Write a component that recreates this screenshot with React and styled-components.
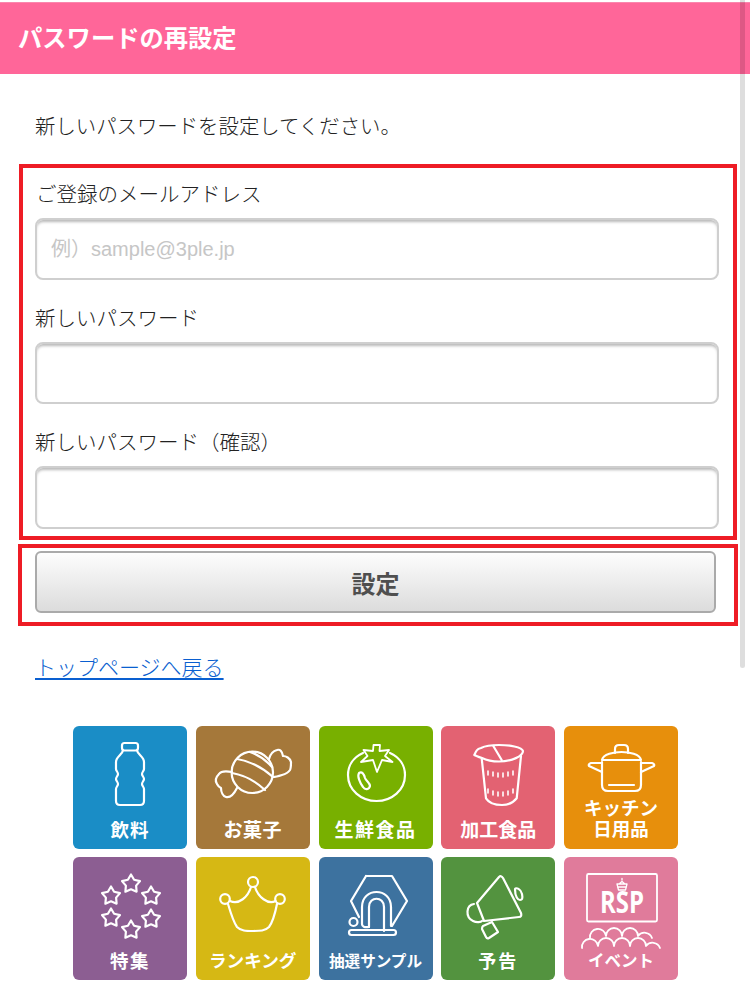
import React from "react";
import styled, { createGlobalStyle } from "styled-components";

const Global = createGlobalStyle`
  html, body { margin: 0; padding: 0; background: #fff; }
  body { font-family: "Noto Sans CJK JP", "Noto Sans", sans-serif; color: #222; overflow: hidden; }
`;
const Page = styled.div`position: relative; width: 750px; height: 996px; overflow: hidden;`;
const ScrollThumb = styled.div`
  position: absolute; top: 0; right: 5px; width: 5px; height: 668px;
  background: rgba(0,0,0,.13); border-radius: 0 0 3px 3px;
`;
const Header = styled.h1`
  margin: 2px 0 0; height: 72px; display: flex; align-items: center; padding: 0 0 2px 18px;
  background: #ff6699; border-top: 1px solid #fb86ad; box-sizing: border-box;
  color: #fff; font-size: 24.3px; font-weight: 700; line-height: 1;
`;
const Intro = styled.p`
  margin: 0; padding: 36px 0 0 35px; height: 90px; box-sizing: border-box;
  font-size: 20.4px; line-height: 30px; font-weight: 300;
`;
const RedBox = styled.div`border: 4px solid #ee1c25; box-sizing: border-box;`;
const FormBox = styled(RedBox)`
  margin-left: 19px; width: 718px; height: 376px; padding: 10px 14px 7px 12px;
  display: flex; flex-direction: column;
`;
const Label = styled.label`
  display: block; font-size: 20.5px; line-height: 30px; height: 30px; font-weight: 300;
  margin: ${p => (p.$first ? "0 0 10px 1px" : "22px 0 10px 0")};
`;
const Input = styled.input`
  display: block; width: 100%; height: ${p => p.$h || 62}px; box-sizing: border-box; padding: 0 14px;
  border: 2px solid #cfcfcf; border-radius: 8px; outline: none; background: #fff;
  box-shadow: inset 0 3px 3px -1px rgba(0,0,0,.28);
  font-family: "Liberation Sans", "Noto Sans CJK JP", sans-serif; font-size: 20px; font-weight: 400;
  &::placeholder { color: #c6c6c6; opacity: 1; }
`;
const ButtonBox = styled(RedBox)`
  margin: 4px 0 0 18px; width: 720px; height: 82px; padding: 3px 18px 0 13px;
`;
const SubmitButton = styled.button`
  display: block; width: 100%; height: 62px; box-sizing: border-box; padding: 0;
  border: 2px solid #aaa; border-radius: 6px;
  background: linear-gradient(#fdfdfd, #dcdcdc);
  color: #4f4f4f; font-family: "Noto Sans CJK JP", sans-serif; font-size: 24px; font-weight: 700;
`;
const BackLink = styled.a`
  display: inline-block; margin: 25px 0 0 35px; font-size: 21px; line-height: 30px; font-weight: 300;
  color: #0a5fd0; text-decoration: underline; text-underline-offset: 3px;
`;
const LinkRow = styled.div`height: 100px;`;
const Grid = styled.div`
  margin-left: 73px; display: grid; grid-template-columns: repeat(5, 114px);
  grid-auto-rows: 123px; column-gap: 8.75px; row-gap: 8px;
`;
const Tile = styled.div`
  display: grid; grid-template: 1fr / 1fr; border-radius: 6px; background: ${p => p.$bg}; overflow: hidden;
  & > * { grid-area: 1 / 1; }
`;
const Icon = styled.svg`
  display: block; width: 114px; height: 123px;
  fill: none; stroke: #fff; stroke-width: 2.2; stroke-linecap: round; stroke-linejoin: round;
`;
const TileLabel = styled.span`
  align-self: end; justify-self: center; margin-bottom: ${p => p.$mb ?? 9}px; text-align: center;
  color: #fff; font-weight: 700; white-space: nowrap;
  font-size: ${p => p.$size}px; line-height: ${p => p.$lh || 22}px;
  letter-spacing: ${p => p.$ls || 0}px;
`;

const star = (cx, cy, r) => {
  const pts = [];
  for (let i = 0; i < 10; i++) {
    const rad = i % 2 ? r * 0.56 : r;
    const a = -Math.PI / 2 + (i * Math.PI) / 5;
    pts.push(`${(cx + rad * Math.cos(a)).toFixed(1)},${(cy + rad * Math.sin(a)).toFixed(1)}`);
  }
  return pts.join(" ");
};

const Bottle = () => (
  <Icon viewBox="0 0 114 123">
    <rect x="49" y="17" width="16" height="7.500" rx="2.500" />
    <path d="M50 24.500C49 29 43 31 43 36V43C43 45 45 46 45 48S43 51 43 53 45 56 45 58 43 61 43 63V75Q43 79 47 79H67Q71 79 71 75V63C71 61 69 60 69 58S71 55 71 53 69 50 69 48 71 45 71 43V36C71 31 65 29 64 24.500" />
  </Icon>
);
const Candy = () => (
  <Icon viewBox="0 0 114 123">
    <circle cx="56.300" cy="46.300" r="20.700" />
    <path d="M41 33Q60 36 77 51" />
    <path d="M36 47Q54 50 69 64" />
    <path d="M54 26Q66 30 76 41" />
    <path d="M36 46C31 45 25 45 23 48 20 51 19 55 21 58 22 60 23 61 25 62 25 66 27 70 30 71 34 72 38 68 41 62" />
    <path d="M73 33C74 29 77 25 81 24 84 23 86 25 87 30 90 30 94 32 95 36 95 39 95 42 94 44 92 47 90 48 86 49 83 50 79 51 77 51" />
  </Icon>
);
const Tomato = () => (
  <Icon viewBox="0 0 114 123">
    <path d="M44 27C35 31 29 39 29 49 29 64 42 75 57.500 75S86 64 86 49C86 39 80 31 71 27" />
    <path d="M54.500 19H61L60.500 25 70 24 66 30 73.500 36 63 34 58 46 54 34 42 36 48.500 30 44.500 24 54 25Z" strokeWidth="1.800" />
    <path d="M40 47C43 45 45 48 46 52 47 55 51 57 51 60 50 64 46 64 44 61 41 57 38 50 40 47Z" />
  </Icon>
);
const Cup = () => (
  <Icon viewBox="0 0 114 123">
    <path d="M33.300 29C35 25 36 23 40 22 46 19 52 19 58 19 68 19 81 21 82 25 82 30 71 35.500 58 35.500 51 35.500 45 34 41 32 38 31 35 30 33.300 29Z" />
    <path d="M52.300 20L60.700 34" />
    <path d="M40.700 32.300L45 72.300C48 77 55 79 61 79S72 77 75.700 72.300L80 30" />
    <path d="M47 45V49M52 46V50M57 47V51M62 47V51M67 46V50M72 45V49M47 63V67M52 65V69M57 66V70M62 66V70M67 65V69M72 63V67" strokeWidth="1.600" />
  </Icon>
);
const Pot = () => (
  <Icon viewBox="0 0 114 123">
    <path d="M51 27V23Q51 19 55 19H60Q64 19 64 23V27" />
    <path d="M38 34C39 28 50 26 57.500 26S76 28 77 34Z" />
    <path d="M38 36V59Q38 65 44 65H71Q77 65 77 59V36" />
    <path d="M38 37H27Q24 38 25 40L38 46" />
    <path d="M77 37H88Q91 38 90 40L77 46" />
    <path d="M45 59H70" />
  </Icon>
);
const Stars = () => (
  <Icon viewBox="0 0 114 123">
    {[[58, 27], [38, 39], [78, 39], [38, 61], [78, 62], [58, 73]].map(([x, y]) => (
      <polygon key={`${x}${y}`} points={star(x, y, 9.500)} />
    ))}
  </Icon>
);
const Crown = () => (
  <Icon viewBox="0 0 114 123">
    <circle cx="57" cy="25" r="5" />
    <circle cx="29" cy="42" r="4.800" />
    <circle cx="84" cy="42" r="4.800" />
    <path d="M34 44C43 48 52 40 55 30M59 30C62 40 72 48 79.500 44" />
    <path d="M32 47C35 57 38 66 41 70 45 74 50 74 57 74S69 74 73 70C76 66 79 57 81 47" />
  </Icon>
);
const Sampling = () => (
  <Icon viewBox="0 0 114 123">
    <path d="M47 19H73L88 44 73 69H72V50C72 30 43 30 43 50V67" />
    <path d="M47 19 32 44 40 60" />
    <path d="M50 70V50C50 39 65 39 65 50V74" />
    <circle cx="34.500" cy="65" r="4" />
    <path d="M43 67Q43 71 50 70" />
    <rect x="30" y="73" width="47" height="5" rx="2.500" />
  </Icon>
);
const Megaphone = () => (
  <Icon viewBox="0 0 114 123">
    <path d="M36 46L58 20Q60 18 62 21L80 56Q81 60 78 60L43 64Z" />
    <path d="M33 47C25 48 24 60 32 64 36 66 40 65 41 64" />
    <path d="M42 69L51 65 57 75 48 81Q46 82 45 80L41 72Q41 70 42 69Z" />
    <path d="M74 32C75 30 80 32 81 37S81 43 79 43 74 40 74 32Z" />
  </Icon>
);
const RspText = styled.text`
  fill: #fff; stroke: none; font-family: "Open Sans", "Liberation Sans", sans-serif; font-weight: 700; font-size: 30px;
`;
const Rsp = () => (
  <Icon viewBox="0 0 114 123">
    <rect x="23" y="17" width="70" height="47.500" rx="1.500" strokeWidth="1.800" />
    <RspText x="58" y="56" textAnchor="middle" textLength="44" lengthAdjust="spacingAndGlyphs">RSP</RspText>
    <path d="M53 27H63L61.500 33H54.500ZM55 27L58 24.500 61 27M58 21.500V23M53.500 30H62.500" strokeWidth="1.300" />
    <path d="M26 81A8 8 0 0 1 42 79A8 8 0 0 1 58 79A8 8 0 0 1 74 79A8 8 0 0 1 88 81" strokeWidth="1.800" />
    <path d="M18 91A8 8 0 0 1 34 89A8 8 0 0 1 50 89A8 8 0 0 1 66 89A8 8 0 0 1 82 89A8 8 0 0 1 96 91" strokeWidth="1.800" />
  </Icon>
);

const tiles = [
  { bg: "#1a8dc6", I: Bottle, text: "飲料", size: 18.5, ls: 1 },
  { bg: "#a5783a", I: Candy, text: "お菓子", size: 19, ls: 0.5 },
  { bg: "#78b000", I: Tomato, text: "生鮮食品", size: 19, ls: 1.5 },
  { bg: "#e36272", I: Cup, text: "加工食品", size: 19 },
  { bg: "#e78f0c", I: Pot, text: <>キッチン<br />日用品</>, size: 18.5, lh: 21, mb: 10 },
  { bg: "#8c5e92", I: Stars, text: "特集", size: 18.5, ls: 1.5 },
  { bg: "#d6b814", I: Crown, text: "ランキング", size: 17.6 },
  { bg: "#3d729f", I: Sampling, text: "抽選サンプル", size: 15.6 },
  { bg: "#53933f", I: Megaphone, text: "予告", size: 18, ls: 2 },
  { bg: "#e07b9b", I: Rsp, text: "イベント", size: 16.5 },
];

export default function App() {
  return (
    <Page>
      <Global />
      <Header>パスワードの再設定</Header>
      <Intro>新しいパスワードを設定してください。</Intro>
      <FormBox>
        <Label $first>ご登録のメールアドレス</Label>
        <Input placeholder="例）sample@3ple.jp" />
        <Label>新しいパスワード</Label>
        <Input />
        <Label>新しいパスワード（確認）</Label>
        <Input $h={63} />
      </FormBox>
      <ButtonBox>
        <SubmitButton>設定</SubmitButton>
      </ButtonBox>
      <LinkRow>
        <BackLink href="#">トップページへ戻る</BackLink>
      </LinkRow>
      <Grid>
        {tiles.map(({ bg, I, text, size, ls, lh, mb }, i) => (
          <Tile key={i} $bg={bg}>
            <I />
            <TileLabel $size={size} $ls={ls} $lh={lh} $mb={mb}>{text}</TileLabel>
          </Tile>
        ))}
      </Grid>
      <ScrollThumb />
    </Page>
  );
}
